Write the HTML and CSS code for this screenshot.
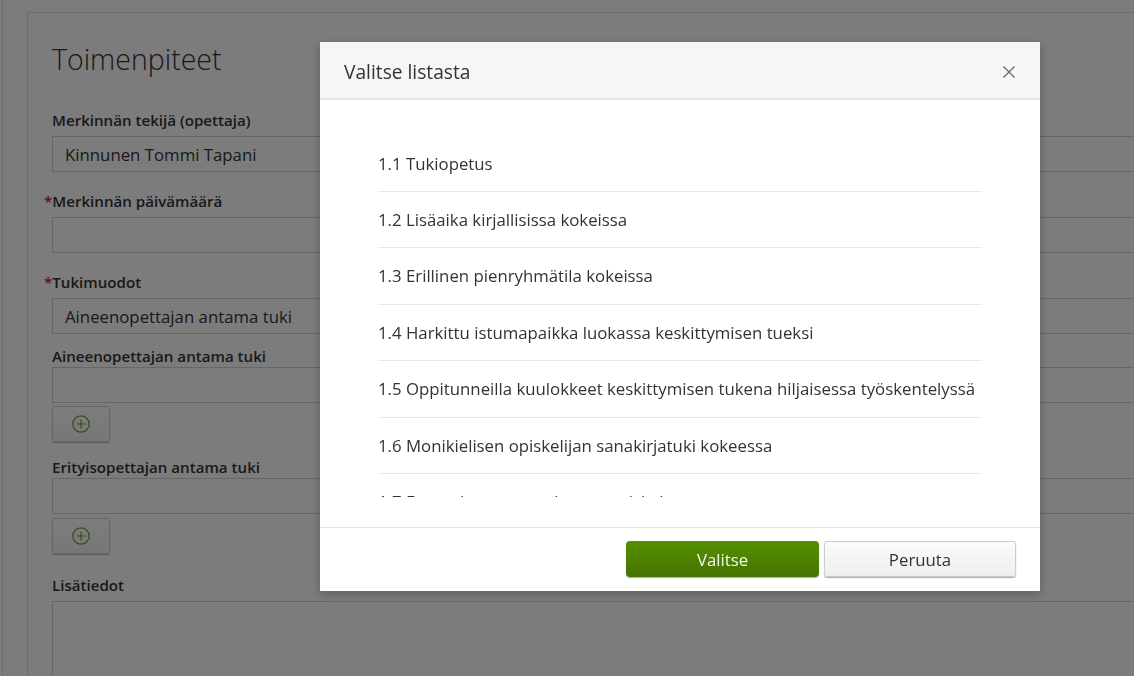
FILE: index.html
```html
<!doctype html>
<html>
    <head>
        <title>Toimenpiteet</title>
        <meta charset="utf-8">
        <link rel="stylesheet" href="styles.css">
    </head>

    <body>
        <div class="rail">
            <div class="panel">
                <h2>Toimenpiteet</h2>

                <label class="lbl lbl-first">Merkinnän tekijä (opettaja)</label>
                <div class="box">Kinnunen Tommi Tapani</div>

                <label class="lbl"><span class="req">*</span>Merkinnän päivämäärä</label>
                <div class="box"></div>

                <label class="lbl"><span class="req">*</span>Tukimuodot</label>
                <div class="box">Aineenopettajan antama tuki</div>

                <label class="lbl lbl-tight">Aineenopettajan antama tuki</label>
                <div class="box"></div>
                <button class="add">
                    <svg width="18" height="18" viewBox="0 0 18 18"><circle cx="9" cy="9" r="8.2"/><path d="M9 4.5v9M4.5 9h9"/></svg>
                </button>

                <label class="lbl lbl-tight lbl-after-add">Erityisopettajan antama tuki</label>
                <div class="box"></div>
                <button class="add add-low">
                    <svg width="18" height="18" viewBox="0 0 18 18"><circle cx="9" cy="9" r="8.2"/><path d="M9 4.5v9M4.5 9h9"/></svg>
                </button>

                <label class="lbl lbl-last">Lisätiedot</label>
                <div class="box box-area"></div>
            </div>
        </div>

        <!-- dimmed layer over the form, holds the dialog -->
        <div class="backdrop">
            <div class="modal">
                <div class="modal-head">
                    <span class="modal-title">Valitse listasta</span>
                    <svg class="close" width="12" height="12" viewBox="0 0 12 12"><path d="M.5.5l11 11M11.5.5l-11 11"/></svg>
                </div>
                <div class="modal-body">
                    <ul class="options">
                        <li>1.1 Tukiopetus</li>
                        <li>1.2 Lisäaika kirjallisissa kokeissa</li>
                        <li>1.3 Erillinen pienryhmätila kokeissa</li>
                        <li>1.4 Harkittu istumapaikka luokassa keskittymisen tueksi</li>
                        <li>1.5 Oppitunneilla kuulokkeet keskittymisen tukena hiljaisessa työskentelyssä</li>
                        <li>1.6 Monikielisen opiskelijan sanakirjatuki kokeessa</li>
                        <li>1.7 Ennen koetta tuen kautta opiskelu</li>
                    </ul>
                </div>
                <div class="modal-foot">
                    <button class="btn btn-primary">Valitse</button>
                    <button class="btn">Peruuta</button>
                </div>
            </div>
        </div>
    </body>
</html>
```

FILE: styles.css
```css
html, body {
    height: 100%;
}

body {
    margin: 0;
    overflow: hidden;
    background: #f8f8f8;
    color: #333;
    font: 16.8px/22.4px 'Open Sans', sans-serif;
}

.rail {
    width: 1300px;
    height: 900px;
    box-sizing: border-box;
    margin-left: 2px;
    padding: 12px 0 0 24px;
    border-left: 1px solid #ddd;
}

.panel {
    height: 880px;
    box-sizing: border-box;
    padding: 23px 0 0 24px;
    border: 1px solid #ddd;
}

h2 {
    margin: 0;
    font-size: 28.5px;
    font-weight: 300;
    line-height: 46px;
}

.lbl {
    display: block;
    height: 20px;
    margin-top: 19px;
    margin-bottom: 6px;
    font-size: 15.12px;
    font-weight: 600;
    line-height: 20px;
}

.lbl-first {
    margin-top: 28px;
    margin-bottom: 6px;
}

.lbl-tight {
    margin-top: 12px;
    margin-bottom: 1px;
}

.lbl-after-add {
    margin-top: 15px;
}

.lbl-last {
    margin-top: 21px;
    margin-bottom: 6px;
}

.req {
    margin-left: -8px;
    color: #b71c1c;
}

.box {
    width: 1180px;
    height: 36px;
    box-sizing: border-box;
    padding: 0 12px;
    background: #f8f8f8;
    border: 1px solid #ccc;
    line-height: 36px;
}

.box-area {
    height: 200px;
}

.add {
    display: flex;
    align-items: center;
    justify-content: center;
    width: 58px;
    height: 36px;
    margin-top: 3px;
    padding: 0;
    background: linear-gradient(#fafafa, #eee);
    border: 1px solid #ccc;
    border-radius: 3px;
    box-shadow: 0 1px 1px #aaa;
}

.add-low {
    margin-top: 4px;
}

.add svg {
    fill: none;
    stroke: #6f9a2c;
    stroke-width: 1.2;
}

.backdrop {
    position: fixed;
    top: 0;
    right: 0;
    bottom: 0;
    left: 0;
    background: rgba(0, 0, 0, .5);
}

.modal {
    width: 720px;
    margin: 42px auto 0 320px;
    background: #fff;
    box-shadow: 0 3px 9px rgba(0, 0, 0, .25);
}

.modal-head {
    display: flex;
    align-items: center;
    justify-content: space-between;
    height: 52px;
    padding: 4px 25px 0 24px;
    background: #f6f6f6;
    border-bottom: 2px solid #e5e5e5;
}

.modal-title {
    font-size: 19.2px;
}

.close {
    fill: none;
    stroke: #666;
    stroke-width: 1.2;
}

.modal-body {
    height: 428px;
    box-sizing: border-box;
    padding: 35.6px 58px 0;
    border-bottom: 1px solid #e5e5e5;
}

.options {
    height: 361px;
    margin: 0;
    padding: 0;
    overflow: hidden;
    list-style: none;
}

.options li {
    padding: 17px 0 16px;
    border-bottom: 1px solid #e8e8e8;
}

.modal-foot {
    display: flex;
    justify-content: flex-end;
    gap: 5px;
    padding: 13px 24px 14px;
}

.btn {
    width: 192px;
    height: 36px;
    padding: 0;
    color: #333;
    background: linear-gradient(#fbfbfb, #eee);
    border: 1px solid #ccc;
    border-radius: 3px;
    box-shadow: 0 1px 1px #aaa;
    font: 16.8px 'Open Sans', sans-serif;
}

.btn-primary {
    width: 193px;
    color: #f4f9ec;
    background: linear-gradient(#559100, #457300);
    border: none;
    border-radius: 4px;
}
```
